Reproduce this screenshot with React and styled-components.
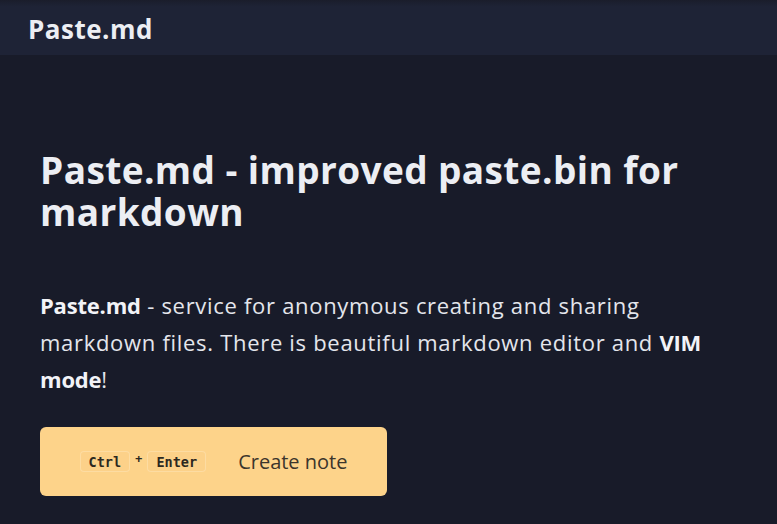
import React from "react";
import styled, { createGlobalStyle } from "styled-components";

const GlobalStyle = createGlobalStyle`
  html, body {
    margin: 0;
    padding: 0;
    background-color: #181b29;
  }
  body {
    font-family: "Open Sans", "Liberation Sans", sans-serif;
    color: #e9eaf0;
  }
`;

const Page = styled.div`
  min-height: 100vh;
  background-color: #181b29;
`;

const Header = styled.header`
  height: 55px;
  display: flex;
  align-items: center;
  padding: 0 28px;
  background: linear-gradient(180deg, #1a1d2b 0%, #1e2336 12%, #1e2336 100%);
  box-sizing: border-box;
`;

const Logo = styled.a`
  font-family: "Open Sans", sans-serif;
  font-weight: 700;
  font-size: 26px;
  letter-spacing: 0.5px;
  color: #eceef3;
  text-decoration: none;
  padding-top: 2px;
`;

const Main = styled.main`
  padding: 94px 40px 0 40px;
`;

const Title = styled.h1`
  margin: 0;
  font-family: "Open Sans", sans-serif;
  font-weight: 700;
  font-size: 37px;
  letter-spacing: 0.4px;
  line-height: 42px;
  color: #eceef3;
`;

const Text = styled.p`
  margin: 54px 0 0;
  font-family: "Open Sans", sans-serif;
  font-size: 22px;
  letter-spacing: 0.7px;
  line-height: 37px;
  color: #e4e6ec;
  b {
    font-weight: 700;
    letter-spacing: -0.2px;
    color: #f2f3f7;
  }
`;

const CreateButton = styled.button`
  margin-top: 29px;
  width: 347px;
  height: 69px;
  display: flex;
  align-items: center;
  justify-content: center;
  gap: 32px;
  border: none;
  border-radius: 6px;
  background-color: #fdd38a;
  color: #3b352c;
  cursor: pointer;
  font-family: "Open Sans", sans-serif;
  font-size: 20px;
`;

const Shortcut = styled.span`
  display: flex;
  align-items: center;
  gap: 5px;
`;

const Key = styled.kbd`
  display: inline-flex;
  align-items: center;
  height: 21px;
  box-sizing: border-box;
  font-family: "DejaVu Sans Mono", "Liberation Mono", monospace;
  font-weight: 700;
  font-size: 13.5px;
  padding: 0 8px;
  border: 1px solid rgba(255, 240, 210, 0.35);
  border-radius: 4px;
  background-color: #fcd189;
  color: #2c2820;
`;

const Plus = styled.span`
  font-size: 13px;
  font-weight: 700;
  color: #2c2820;
  margin-top: -8px;
`;

export default function App() {
  return (
    <Page>
      <GlobalStyle />
      <Header>
        <Logo href="#">Paste.md</Logo>
      </Header>
      <Main>
        <Title>Paste.md - improved paste.bin for markdown</Title>
        <Text>
          <b>Paste.md</b> - service for anonymous creating and sharing markdown
          files. There is beautiful markdown editor and <b>VIM mode</b>!
        </Text>
        <CreateButton>
          <Shortcut>
            <Key>Ctrl</Key>
            <Plus>+</Plus>
            <Key>Enter</Key>
          </Shortcut>
          Create note
        </CreateButton>
      </Main>
    </Page>
  );
}
